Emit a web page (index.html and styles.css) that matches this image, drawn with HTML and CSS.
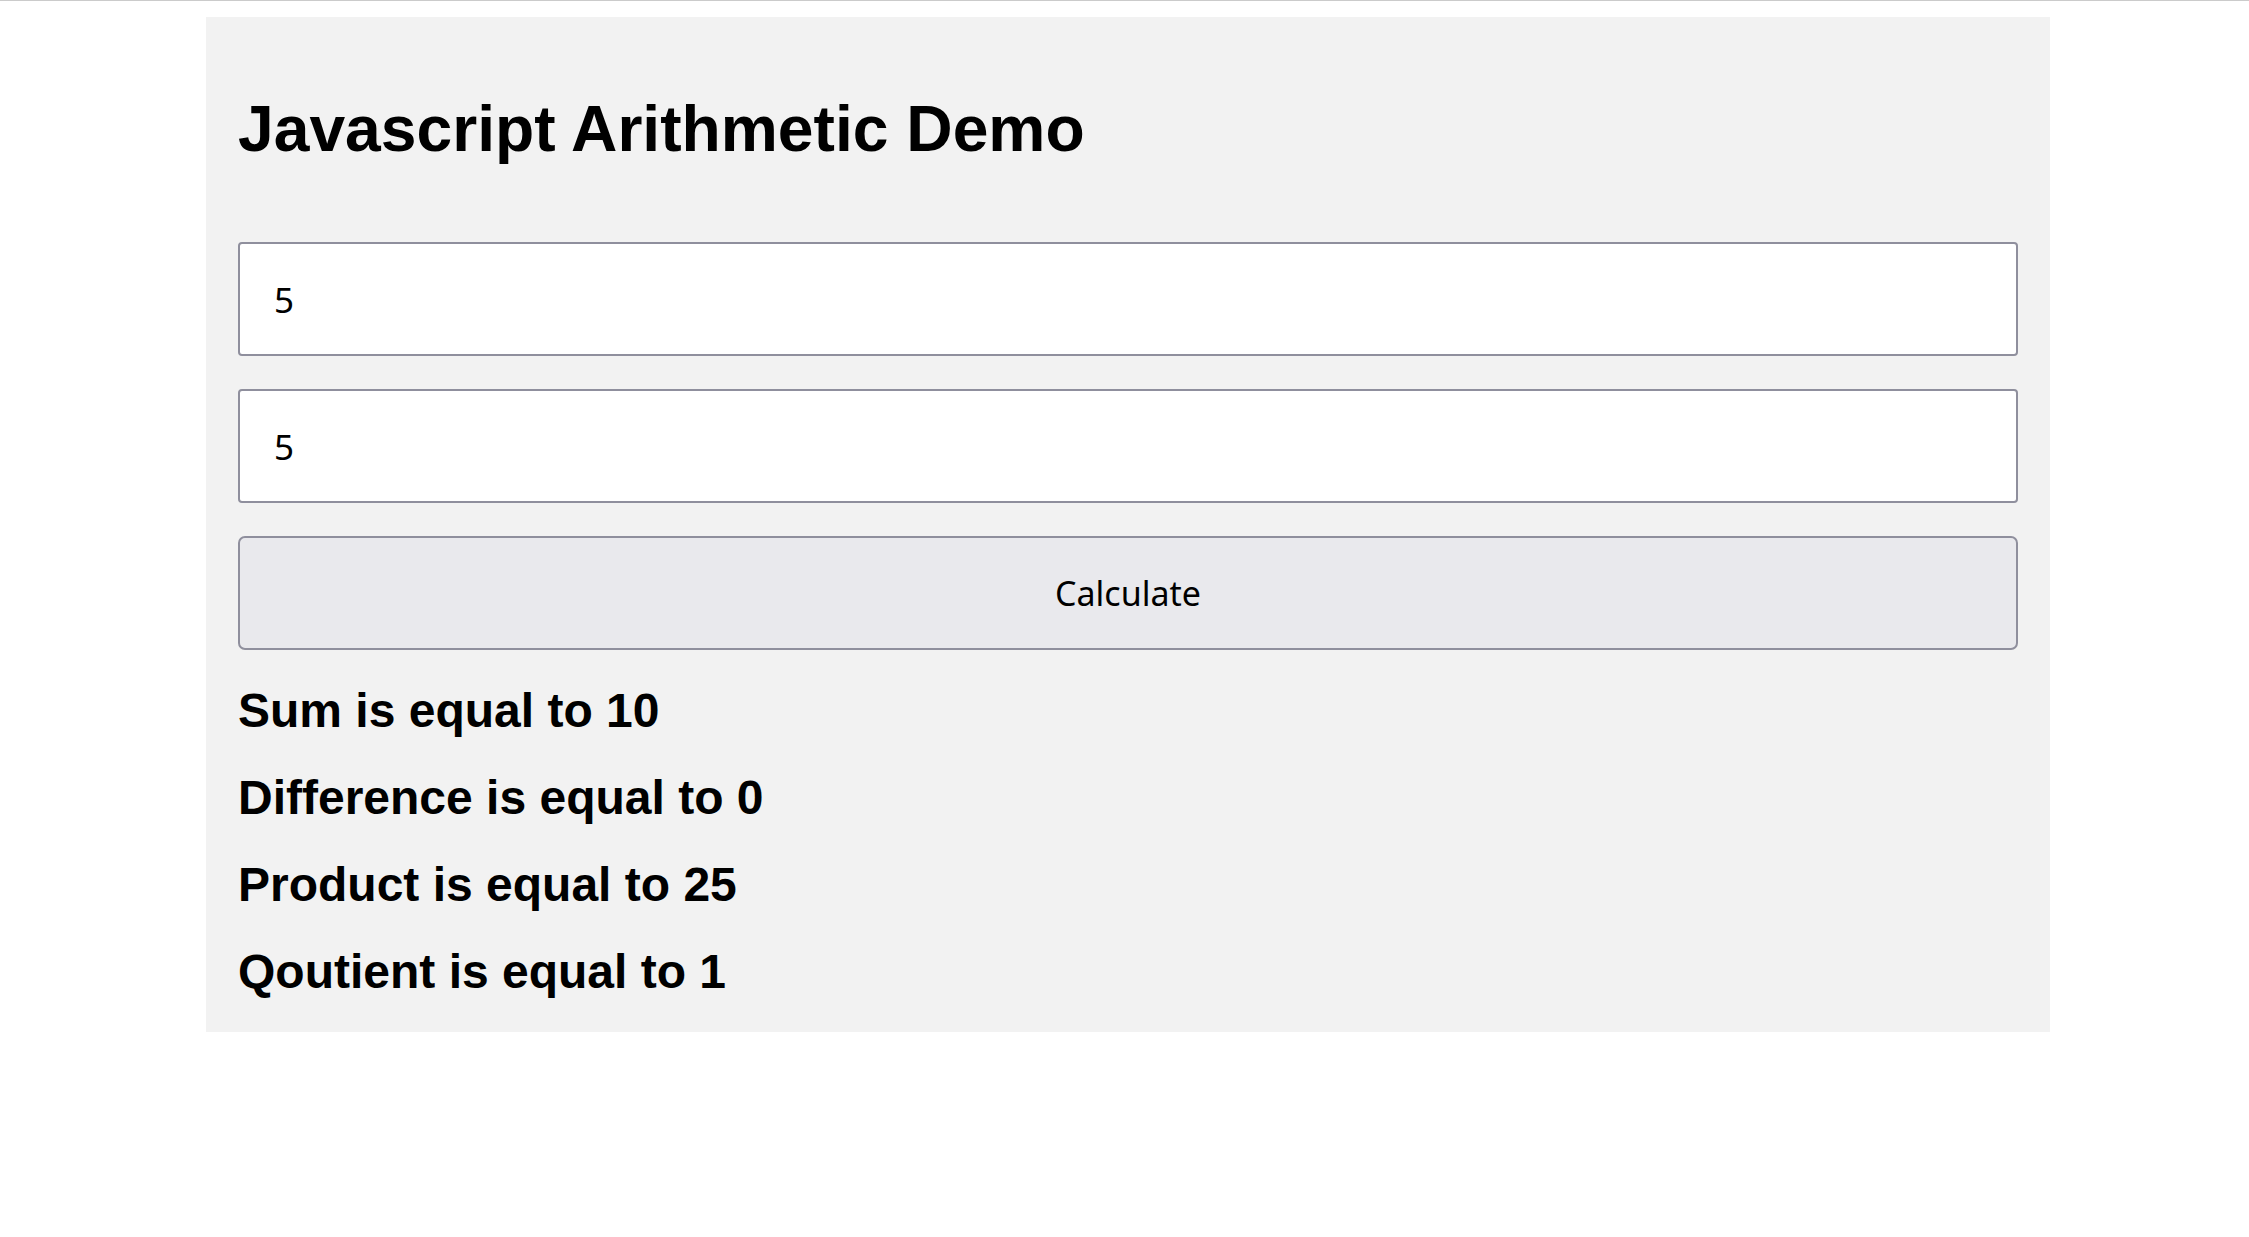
FILE: index.html
```html
<!DOCTYPE html>
<html lang="en">
<head>
<meta charset="utf-8">
<title>Javascript Arithmetic Demo</title>
<link rel="stylesheet" href="styles.css">
</head>
<body>
<main class="panel">
  <h1 class="title">Javascript Arithmetic Demo</h1>
  <div class="form">
    <input class="field" type="text" value="5">
    <input class="field" type="text" value="5">
    <button class="calc" type="button">Calculate</button>
  </div>
  <div class="results">
    <p class="result">Sum is equal to 10</p>
    <p class="result">Difference is equal to 0</p>
    <p class="result">Product is equal to 25</p>
    <p class="result">Qoutient is equal to 1</p>
  </div>
</main>
</body>
</html>
```

FILE: styles.css
```css
html, body {
  margin: 0;
  background: #ffffff;
}

body {
  border-top: 1px solid #cbcbcb;
  padding-top: 16px;
  font-family: "Liberation Sans", Arial, sans-serif;
  color: #000;
}

.panel {
  box-sizing: border-box;
  width: 1844px;
  margin-left: 206px;
  padding: 32px;
  background: #f2f2f2;
}

.title {
  margin: 43px 0 76px;
  font-size: 64.2px;
  line-height: 74px;
  font-weight: bold;
}

.form {
  display: flex;
  flex-direction: column;
  gap: 33px;
}

.field,
.calc {
  box-sizing: border-box;
  width: 100%;
  height: 114px;
  margin: 0;
  border: 2px solid #8f8f9d;
  font-family: "Noto Sans", "Open Sans", sans-serif;
  color: #000;
}

.field {
  background: #ffffff;
  border-radius: 4px;
  padding: 0 34px;
  font-size: 35px;
  outline: none;
}

.calc {
  background: #e9e9ed;
  border-radius: 7px;
  padding: 0;
  font-size: 34px;
}

.results {
  display: flex;
  flex-direction: column;
  gap: 32px;
  margin-top: 33px;
  padding-bottom: 1px;
}

.result {
  margin: 0;
  font-size: 48px;
  line-height: 55px;
  font-weight: bold;
}
```
